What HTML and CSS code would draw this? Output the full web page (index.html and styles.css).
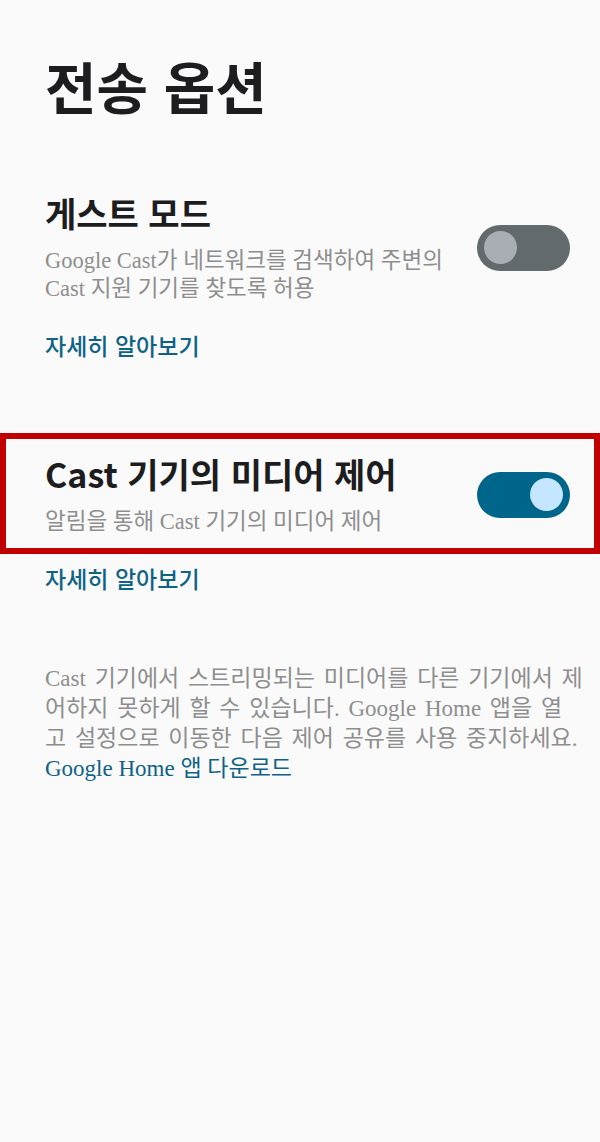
FILE: index.html
```html
<!DOCTYPE html>
<html lang="ko">
<head>
  <meta charset="UTF-8" />
  <meta name="viewport" content="width=device-width, initial-scale=1.0"/>
  <title>전송 옵션</title>
  <link rel="stylesheet" href="styles.css">
</head>
<body>
<div class="page">
  <h1 class="title">전송 옵션</h1>

  <!-- 게스트 모드 -->
  <div class="setting">
    <div class="setting-text">
      <h2 class="setting-title">게스트 모드</h2>
      <p class="setting-desc">Google Cast가 네트워크를 검색하여 주변의<br>Cast 지원 기기를 찾도록 허용</p>
    </div>
    <div class="switch"><span class="knob"></span></div>
  </div>
  <a class="more-link">자세히 알아보기</a>

  <!-- 미디어 제어 -->
  <div class="setting highlighted">
    <div class="setting-text">
      <h2 class="setting-title">Cast 기기의 미디어 제어</h2>
      <p class="setting-desc">알림을 통해 Cast 기기의 미디어 제어</p>
    </div>
    <div class="switch on"><span class="knob"></span></div>
  </div>
  <a class="more-link second">자세히 알아보기</a>

  <p class="note">Cast 기기에서 스트리밍되는 미디어를 다른 기기에서 제어하지 못하게 할 수 있습니다. Google Home 앱을 열<br>고 설정으로 이동한 다음 제어 공유를 사용 중지하세요.
    <a class="note-link">Google Home 앱 다운로드</a></p>
</div>
</body>
</html>
```

FILE: styles.css
```css
body {
  margin: 0;
  background-color: #fafafa;
  font-family: "Liberation Serif", "Noto Sans CJK KR", serif;
}
.page {
  padding-top: 49px;
}
.title {
  margin: 0 45px;
  font-family: "Noto Sans CJK KR", sans-serif;
  font-weight: 700;
  font-size: 56px;
  line-height: 72px;
  color: #1d1d1f;
}
.setting {
  display: flex;
  align-items: center;
  justify-content: space-between;
  padding: 0 30px 0 45px;
  margin-top: 71px;
}
.setting.highlighted {
  margin-top: 72px;
  padding: 14px 24px 12px 39px;
  border: 6px solid #c00000;
}
.setting-title {
  margin: 0;
  font-family: "Noto Sans CJK KR", sans-serif;
  font-weight: 700;
  font-size: 34px;
  line-height: 42px;
  color: #1d1d1f;
}
.setting-desc {
  margin: 13px 0 0;
  font-size: 22.5px;
  line-height: 28px;
  color: #8e8e8e;
}
.switch {
  width: 93px;
  height: 46px;
  border-radius: 23px;
  background: #636a6e;
  display: flex;
  align-items: center;
  padding: 0 7px;
  box-sizing: border-box;
  flex-shrink: 0;
}
.switch .knob {
  width: 33px;
  height: 33px;
  border-radius: 50%;
  background: #a9aeb4;
}
.switch.on {
  background: #00658a;
  justify-content: flex-end;
}
.switch.on .knob {
  background: #c4e7ff;
}
.more-link {
  display: block;
  margin: 26px 45px 0;
  font-family: "Noto Sans CJK KR", sans-serif;
  font-weight: 500;
  font-size: 23px;
  line-height: 32px;
  color: #0e6384;
}
.more-link.second {
  margin-top: 8px;
}
.note {
  margin: 70px 16px 0 45px;
  font-size: 23px;
  line-height: 30px;
  word-spacing: 3px;
  color: #8e8e8e;
}
.note-link {
  display: block;
  word-spacing: 0;
  color: #0e6384;
}
```
